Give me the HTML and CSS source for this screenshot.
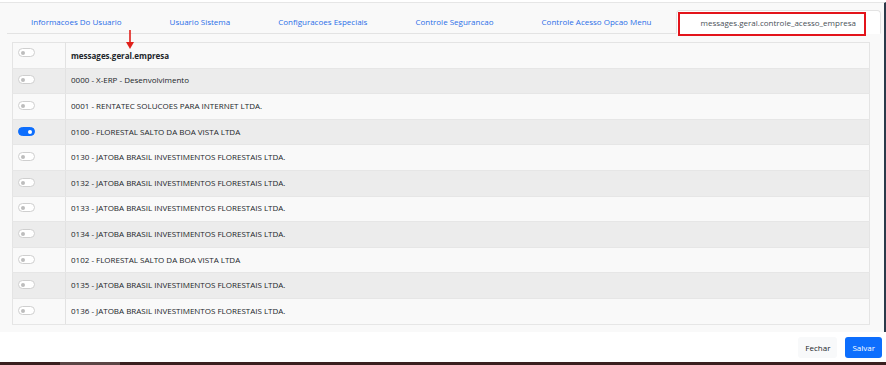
FILE: index.html
```html
<!DOCTYPE html>
<html lang="en">
<head>
  <meta charset="UTF-8" />
  <meta name="viewport" content="width=device-width, initial-scale=1.0"/>
  <title>Controle Acesso Empresa</title>
  <link rel="stylesheet" href="styles.css">
</head>
<body>
  <div class="shell">
    <div class="panel">
      <ul class="tabs">
        <li class="tab">Informacoes Do Usuario</li>
        <li class="tab">Usuario Sistema</li>
        <li class="tab">Configuracoes Especiais</li>
        <li class="tab">Controle Segurancao</li>
        <li class="tab">Controle Acesso Opcao Menu</li>
        <li class="tab active">messages.geral.controle_acesso_empresa<span class="mark-box"></span></li>
      </ul>

      <div class="table-wrap">
        <svg class="mark-arrow" width="8" height="20" viewBox="0 0 8 20">
          <line x1="4" y1="0" x2="4" y2="13" stroke="#e0201b" stroke-width="1.6"/>
          <polygon points="0,12 8,12 4,19" fill="#e0201b"/>
        </svg>
        <table class="grid">
          <thead>
            <tr><th class="sel"><span class="switch"></span></th><th>messages.geral.empresa</th></tr>
          </thead>
          <tbody>
            <tr><td class="sel"><span class="switch"></span></td><td>0000 - X-ERP - Desenvolvimento</td></tr>
            <tr><td class="sel"><span class="switch"></span></td><td>0001 - RENTATEC SOLUCOES PARA INTERNET LTDA.</td></tr>
            <tr><td class="sel"><span class="switch on"></span></td><td>0100 - FLORESTAL SALTO DA BOA VISTA LTDA</td></tr>
            <tr><td class="sel"><span class="switch"></span></td><td>0130 - JATOBA BRASIL INVESTIMENTOS FLORESTAIS LTDA.</td></tr>
            <tr><td class="sel"><span class="switch"></span></td><td>0132 - JATOBA BRASIL INVESTIMENTOS FLORESTAIS LTDA.</td></tr>
            <tr><td class="sel"><span class="switch"></span></td><td>0133 - JATOBA BRASIL INVESTIMENTOS FLORESTAIS LTDA.</td></tr>
            <tr><td class="sel"><span class="switch"></span></td><td>0134 - JATOBA BRASIL INVESTIMENTOS FLORESTAIS LTDA.</td></tr>
            <tr><td class="sel"><span class="switch"></span></td><td>0102 - FLORESTAL SALTO DA BOA VISTA LTDA</td></tr>
            <tr><td class="sel"><span class="switch"></span></td><td>0135 - JATOBA BRASIL INVESTIMENTOS FLORESTAIS LTDA.</td></tr>
            <tr><td class="sel"><span class="switch"></span></td><td>0136 - JATOBA BRASIL INVESTIMENTOS FLORESTAIS LTDA.</td></tr>
          </tbody>
        </table>
      </div>
    </div>

    <div class="footer">
      <button type="button" class="btn btn-light">Fechar</button>
      <button type="button" class="btn btn-primary">Salvar</button>
    </div>
  </div>
  <div class="taskbar"><span class="taskbar-item"></span></div>
</body>
</html>
```

FILE: styles.css
```css
* {
  box-sizing: border-box;
}
body {
  margin: 0;
  font-family: 'Open Sans', 'Noto Sans', sans-serif;
  font-size: 8px;
  color: #212529;
  background: #fff;
}
.shell {
  height: 362px;
  display: flex;
  flex-direction: column;
}
.panel {
  flex: 1;
  background: #f9f9f9;
  border-top: 1px solid #e6e6e6;
  border-right: 2px solid #2b3a4a;
  margin-top: 2px;
  padding: 7px 8px 0 7px;
}
.tabs {
  list-style: none;
  margin: 0;
  padding: 0;
  display: flex;
  border-bottom: 1px solid #e3e3e3;
  height: 24px;
}
.tab {
  position: relative;
  padding: 0 24px;
  line-height: 23px;
  color: #2a6ee8;
  white-space: nowrap;
}
.tab.active {
  background: #fff;
  color: #495057;
  border: 1px solid #e3e3e3;
  border-bottom-color: #fff;
  border-radius: 4px 4px 0 0;
  margin-bottom: -1px;
  height: 24px;
}
.mark-box {
  position: absolute;
  left: 1px;
  top: 1px;
  width: 188px;
  height: 24px;
  border: 2px solid #e3141b;
}
.table-wrap {
  position: relative;
  margin: 8px 6px 0 5px;
}
.mark-arrow {
  position: absolute;
  left: 114px;
  top: -12px;
}
.grid {
  width: 100%;
  border-collapse: collapse;
  border: 1px solid #e4e4e4;
  font-size: 8px;
}
.grid tr {
  height: 25.6px;
}
.grid th,
.grid td {
  padding: 0 5px 2px;
  text-align: left;
  border-bottom: 1px solid #e6e6e6;
}
.grid th {
  font-weight: bold;
  padding: 1px 5px 0;
}
.grid tbody tr:nth-child(odd) {
  background: #ececec;
}
.grid .sel {
  width: 53px;
  border-right: 1px solid #e2e2e2;
  padding-left: 5px;
}
.switch {
  display: block;
  position: relative;
  width: 17px;
  height: 9px;
  border: 1px solid #cfcfcf;
  border-radius: 5px;
  background: #fff;
}
.switch::after {
  content: "";
  position: absolute;
  left: 2px;
  top: 2px;
  width: 4px;
  height: 4px;
  border-radius: 50%;
  background: #bdbdbd;
}
.switch.on {
  background: #0d6efd;
  border-color: #0d6efd;
}
.switch.on::after {
  left: 9px;
  background: #fff;
}
.grid th .switch {
  margin-top: -7px;
}
.footer {
  height: 30px;
  display: flex;
  justify-content: flex-end;
  align-items: center;
  gap: 8px;
  padding-right: 4px;
  background: #fff;
}
.btn {
  font-family: inherit;
  font-size: 8px;
  height: 21px;
  padding: 0 7px;
  border: none;
  border-radius: 3px;
}
.btn-light {
  background: #f8f9fa;
  color: #212529;
}
.btn-primary {
  background: #0d6efd;
  color: #fff;
}
.taskbar {
  height: 3px;
  background: #3a1f1f;
}
.taskbar-item {
  display: block;
  margin-left: 60px;
  width: 60px;
  height: 3px;
  background: #5b4545;
}
```
